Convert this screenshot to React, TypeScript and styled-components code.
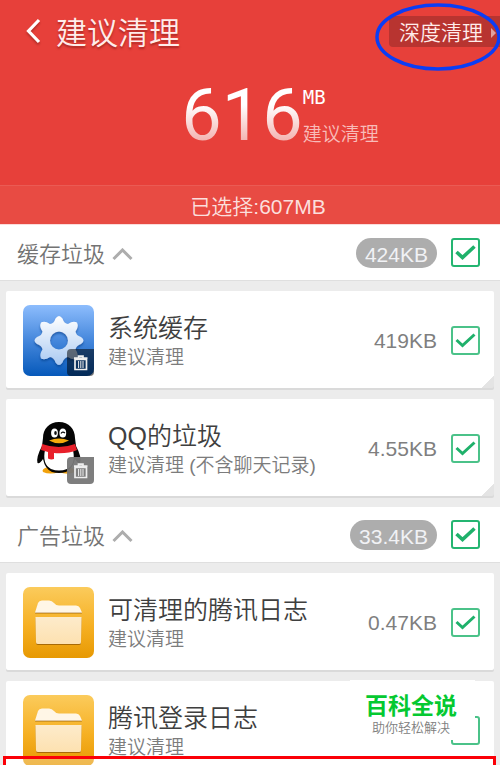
import React, { useId, useState } from "react";
import styled, { createGlobalStyle } from "styled-components";

const GlobalStyle = createGlobalStyle`
  *, *::before, *::after { box-sizing: border-box; }
  body {
    margin: 0;
    background: #ececec;
    font-family: "Liberation Sans", "Noto Sans CJK SC", sans-serif;
    font-weight: 350;
  }
  button, input { margin: 0; font: inherit; }
  h1, h2, h3, p, ul { margin: 0; padding: 0; font-weight: inherit; }
`;

const Page = styled.div`
  position: relative;
  height: 100vh;
  overflow: hidden;
`;

const Header = styled.header`
  background: #e7403a;
  color: #fff;
`;

const TopBar = styled.div`
  display: flex;
  align-items: center;
  height: 62px;
  padding-left: 24px;
`;

const BackButton = styled.button`
  display: flex;
  padding: 0;
  border: 0;
  background: none;
  filter: drop-shadow(0 2px 1px rgba(110, 20, 15, 0.45));
`;

const PageTitle = styled.h1`
  margin-left: 13px;
  padding-top: 5px;
  font-size: 31px;
  line-height: 44px;
  color: #ffecea;
  text-shadow: 0 2px 2px rgba(110, 20, 15, 0.5);
`;

const DeepCleanArea = styled.div`
  position: relative;
  margin-left: auto;
`;

const DeepCleanButton = styled.button`
  display: flex;
  align-items: center;
  gap: 8px;
  height: 31px;
  padding: 3px 4px 0 10px;
  border: 0;
  border-radius: 4px 0 0 4px;
  background: #b83430;
  color: #ffeceb;
  font-size: 21px;
  line-height: 30px;
  white-space: nowrap;
`;

const Ellipse = styled.svg`
  position: absolute;
  top: -14px;
  right: -1px;
  pointer-events: none;
`;

const Hero = styled.div`
  display: flex;
  justify-content: center;
  height: 123px;
  padding: 17px 0 0 60px;
`;

const Amount = styled.div`
  height: 74px;
  font-family: Roboto, sans-serif;
  font-weight: 400;
  font-size: 72px;
  line-height: 74px;
  color: transparent;
  background: linear-gradient(#fff 35%, #f2a9a6 90%);
  background-clip: text;
  -webkit-background-clip: text;
`;

const AmountSide = styled.div`
  display: flex;
  flex-direction: column;
  gap: 14px;
  padding-top: 7px;
`;

const Unit = styled.span`
  font-family: "DejaVu Sans Mono", monospace;
  font-weight: 400;
  font-size: 19px;
  line-height: 22px;
`;

const Hint = styled.span`
  font-size: 19px;
  line-height: 26px;
  color: #f8bcb9;
`;

const Selected = styled.p`
  height: 40px;
  padding-left: 16px;
  border-top: 1px solid #ea5b54;
  border-bottom: 1px solid #fbdcdb;
  background: #e84b43;
  color: #fbdfdd;
  font-size: 21px;
  line-height: 41px;
  text-align: center;
`;

const SectionHead = styled.div`
  display: flex;
  align-items: center;
  gap: 14px;
  height: 56px;
  padding: 0 20px 0 17px;
  border-bottom: 1px solid #dfdfdf;
  background: #fff;
`;

const SectionToggle = styled.button`
  display: flex;
  align-items: center;
  gap: 7px;
  margin-right: auto;
  padding: 4px 0 0;
  border: 0;
  background: none;
  color: #737373;
  font-size: 22px;
  line-height: 32px;
`;

const Pill = styled.span`
  height: 30px;
  padding: 0 9px;
  border-radius: 15px;
  background: #adadad;
  color: #f1f2f5;
  font-size: 21px;
  line-height: 33px;
`;

const CardList = styled.ul`
  display: grid;
  gap: 11px;
  padding: 10px 6px 11px;
  list-style: none;
`;

const Card = styled.li<{ $fold?: boolean }>`
  display: flex;
  align-items: center;
  gap: 14px;
  height: 97px;
  padding: 1px 14px 0 17px;
  border-radius: 2px;
  box-shadow: 0 2px 0 #dadada;
  background: ${(p) =>
    p.$fold
      ? "linear-gradient(135deg, #fff 50%, #e4e4e4 54%) right bottom / 13px 13px no-repeat #fff"
      : "#fff"};
`;

const IconBox = styled.div`
  display: flex;
  flex: none;
`;

const Texts = styled.div`
  flex: 1;
  min-width: 0;
  padding-top: 2px;
  white-space: nowrap;
`;

const CardTitle = styled.h3`
  font-size: 25px;
  line-height: 34px;
  color: #3f3f3f;
`;

const CardNote = styled.p`
  font-size: 19px;
  line-height: 26px;
  color: #7c7c7c;
`;

const Size = styled.span`
  padding-top: 2px;
  font-size: 21px;
  line-height: 30px;
  color: #7f7f7f;
`;

const CheckWrap = styled.label`
  display: grid;
  flex: none;
  width: 29px;
  height: 29px;
`;

const CheckInput = styled.input<{ $strong?: boolean }>`
  grid-area: 1 / 1;
  width: 29px;
  height: 29px;
  appearance: none;
  border: 2px solid ${(p) => (p.$strong ? "#24b571" : "#4bc289")};
  border-radius: 3px;
  background: #fff;
`;

const CheckMark = styled.svg`
  grid-area: 1 / 1;
  pointer-events: none;
  input:not(:checked) + & { visibility: hidden; }
`;

const Watermark = styled.div`
  position: absolute;
  top: 680px;
  right: 25px;
  width: 125px;
  height: 60px;
  padding: 9px 3px 0 0;
  background: #fff;
  text-align: center;
`;

const WatermarkName = styled.p`
  font-size: 23px;
  font-weight: 700;
  line-height: 34px;
  color: #05c931;
`;

const WatermarkNote = styled.p`
  font-size: 13px;
  font-weight: 350;
  line-height: 10px;
  color: #808080;
`;

const RedFrame = styled.div`
  position: absolute;
  top: 756px;
  left: 3px;
  right: 4px;
  bottom: -20px;
  border: 3px solid #fb0007;
  background: rgba(255, 255, 255, 0.3);
`;

function Check({ label, strong, initial = true }: { label: string; strong?: boolean; initial?: boolean }) {
  const [on, setOn] = useState(initial);
  return (
    <CheckWrap>
      <CheckInput type="checkbox" aria-label={label} $strong={strong} checked={on} onChange={() => setOn(!on)} />
      <CheckMark width="29" height="29" viewBox="0 0 29 29" fill="none">
        <path d="M5.5 14 L11.5 19.5 L23.5 8.5" stroke="#1fb16b" strokeWidth={strong ? 3.6 : 3} />
      </CheckMark>
    </CheckWrap>
  );
}

function Trash({ tone, opacity }: { tone: string; opacity: number }) {
  return (
    <g>
      <path d="M44 48 Q44 44 48 44 H71 V67 Q71 71 67 71 H48 Q44 71 44 67 Z" fill={tone} fillOpacity={opacity} />
      <path d="M52 54.5 H63.5 V64.5 H52 Z M51 53.2 H64.5 M55.5 53 V51.2 H60 V53" fill="none" stroke="#eee" strokeWidth="1.7" />
      <path d="M55.6 56 V63 M57.8 56 V63 M60 56 V63" stroke="#eee" strokeWidth="1" />
    </g>
  );
}

function GearIcon() {
  const id = useId();
  return (
    <svg width="71" height="71" viewBox="0 0 71 71">
      <defs>
        <linearGradient id={id + "b"} x2="0" y2="1">
          <stop offset="0" stopColor="#8dbdfd" />
          <stop offset="0.5" stopColor="#4587dc" />
          <stop offset="1" stopColor="#0659ba" />
        </linearGradient>
        <linearGradient id={id + "g"} x2="0" y2="1">
          <stop offset="0" stopColor="#fff" />
          <stop offset="1" stopColor="#a9c9f2" />
        </linearGradient>
        <filter id={id + "s"} x="-20%" y="-20%" width="140%" height="150%">
          <feDropShadow dx="0" dy="2" stdDeviation="1.2" floodColor="#053c88" floodOpacity="0.6" />
        </filter>
      </defs>
      <rect width="71" height="71" rx="7" fill={`url(#${id}b)`} />
      <g filter={`url(#${id}s)`} transform="translate(36 35.5)">
        <path
          fill={`url(#${id}g)`}
          fillRule="evenodd"
          d="M-3.500 -22 Q0 -27 3.500 -22 Q5 -17 9 -16.500 Q14 -20 18 -18 Q20 -14 16.500 -9 Q17 -5 22 -3.500 Q27 0 22 3.500 Q17 5 16.500 9 Q20 14 18 18 Q14 20 9 16.500 Q5 17 3.500 22 Q0 27 -3.500 22 Q-5 17 -9 16.500 Q-14 20 -18 18 Q-20 14 -16.500 9 Q-17 5 -22 3.500 Q-27 0 -22 -3.500 Q-17 -5 -16.500 -9 Q-20 -14 -18 -18 Q-14 -20 -9 -16.500 Q-5 -17 -3.500 -22 Z M0 -9 A9 9 0 1 0 0 9 A9 9 0 1 0 0 -9 Z"
        />
      </g>
      <Trash tone="#000" opacity={0.52} />
    </svg>
  );
}

function PenguinIcon() {
  return (
    <svg width="71" height="71" viewBox="0 0 71 71">
      <g transform="translate(0 10)">
        <path d="M20 49 Q18 46 25 44 L36 48 L47 44 Q54 47 51 49.5 Q44 52 36 49 Q27 52 20 49Z" fill="#f2a20c" />
        <path d="M36 -1 C46 -1 52 6 52 15 L53 23 Q59 34 57 40 Q55 41 52 36 Q50 45 43 49 Q36 51 29 49 Q22 46 20 36 Q17 41 14.500 40 Q13 34 19 23 L20 15 C20 6 26 -1 36 -1Z" fill="#050505" />
        <path d="M22 27 Q36 31 50 27 Q53 42 44 46 Q36 49 28 46 Q19 41 22 27Z" fill="#fff" />
        <path d="M19 21 Q36 27 52 21 L54 27 Q45 31 31 30 V36 Q28 37 25 35.500 V29 L18 27Z" fill="#e8202a" />
        <ellipse cx="31.500" cy="10" rx="3.400" ry="4.600" fill="#fff" />
        <ellipse cx="39.800" cy="10" rx="3.400" ry="4.600" fill="#fff" />
        <ellipse cx="32.500" cy="10" rx="1.300" ry="2" fill="#111" />
        <path d="M38 10.500 Q39.500 8 42 10" fill="none" stroke="#111" strokeWidth="1.300" />
        <path d="M26 17.500 Q36 13.500 46 17.500 Q36 23 26 17.500Z" fill="#f5aa0c" />
      </g>
      <Trash tone="#777" opacity={0.95} />
    </svg>
  );
}

function FolderIcon() {
  const id = useId();
  return (
    <svg width="71" height="71" viewBox="0 0 71 71">
      <defs>
        <linearGradient id={id + "b"} x2="0" y2="1">
          <stop offset="0" stopColor="#fbcb5c" />
          <stop offset="0.55" stopColor="#f6b023" />
          <stop offset="1" stopColor="#e79903" />
        </linearGradient>
        <linearGradient id={id + "f"} x2="0" y2="1">
          <stop offset="0" stopColor="#fdebcb" />
          <stop offset="1" stopColor="#fde1b0" />
        </linearGradient>
        <filter id={id + "s"} x="-20%" y="-20%" width="140%" height="150%">
          <feDropShadow dx="0" dy="1" stdDeviation="0.7" floodColor="#8b5200" floodOpacity="0.7" />
        </filter>
      </defs>
      <rect width="71" height="71" rx="7" fill={`url(#${id}b)`} />
      <path filter={`url(#${id}s)`} d="M12 25.500 L15 16 Q16 13.500 19 13.500 H26 Q29 13.500 31 16 Q33 18.500 36 18.500 H53 Q56 18.500 57 21 L59 25.500Z" fill="#fff6e6" />
      <path filter={`url(#${id}s)`} d="M12.500 30 H58.500 L58 55 Q58 57 56 57 H15 Q13 57 13 55Z" fill={`url(#${id}f)`} />
    </svg>
  );
}

type Item = { title: string; note: string; size?: string; fold?: boolean; checked: boolean; icon: React.ReactNode };
type Group = { name: string; total: string; items: Item[] };

const groups: Group[] = [
  {
    name: "缓存垃圾",
    total: "424KB",
    items: [
      { title: "系统缓存", note: "建议清理", size: "419KB", fold: true, checked: true, icon: <GearIcon /> },
      { title: "QQ的垃圾", note: "建议清理 (不含聊天记录)", size: "4.55KB", fold: true, checked: true, icon: <PenguinIcon /> },
    ],
  },
  {
    name: "广告垃圾",
    total: "33.4KB",
    items: [
      { title: "可清理的腾讯日志", note: "建议清理", size: "0.47KB", checked: true, icon: <FolderIcon /> },
      { title: "腾讯登录日志", note: "建议清理", checked: false, icon: <FolderIcon /> },
    ],
  },
];

export default function App() {
  return (
    <Page>
      <GlobalStyle />
      <Header>
        <TopBar>
          <BackButton aria-label="返回">
            <svg width="19" height="27" viewBox="0 0 19 27" fill="none">
              <path d="M15 2 L4.500 13 L15 24" stroke="#fff" strokeWidth="3.200" />
            </svg>
          </BackButton>
          <PageTitle>建议清理</PageTitle>
          <DeepCleanArea>
            <DeepCleanButton>
              深度清理
              <svg width="5" height="10" viewBox="0 0 5 10">
                <path d="M0 0 L5 5 L0 10Z" fill="#e0a09e" />
              </svg>
            </DeepCleanButton>
            <Ellipse width="126" height="70" viewBox="0 0 126 70" fill="none" aria-hidden="true">
              <ellipse cx="63" cy="35" rx="61" ry="32" stroke="#0b3df5" strokeWidth="3.500" />
            </Ellipse>
          </DeepCleanArea>
        </TopBar>
        <Hero>
          <Amount>616</Amount>
          <AmountSide>
            <Unit>MB</Unit>
            <Hint>建议清理</Hint>
          </AmountSide>
        </Hero>
        <Selected>已选择:607MB</Selected>
      </Header>
      <main>
        {groups.map((group) => (
          <section key={group.name}>
            <SectionHead>
              <SectionToggle aria-expanded="true">
                {group.name}
                <svg width="21" height="14" viewBox="0 0 21 14" fill="none">
                  <path d="M1.500 11 L10.500 2 L19.500 11" stroke="#adadad" strokeWidth="3" />
                </svg>
              </SectionToggle>
              <Pill>{group.total}</Pill>
              <Check label={group.name} strong />
            </SectionHead>
            <CardList>
              {group.items.map((item) => (
                <Card key={item.title} $fold={item.fold}>
                  <IconBox>{item.icon}</IconBox>
                  <Texts>
                    <CardTitle>{item.title}</CardTitle>
                    <CardNote>{item.note}</CardNote>
                  </Texts>
                  {item.size && <Size>{item.size}</Size>}
                  <Check label={item.title} initial={item.checked} />
                </Card>
              ))}
            </CardList>
          </section>
        ))}
      </main>
      <RedFrame />
      <Watermark>
        <WatermarkName>百科全说</WatermarkName>
        <WatermarkNote>助你轻松解决</WatermarkNote>
      </Watermark>
    </Page>
  );
}
